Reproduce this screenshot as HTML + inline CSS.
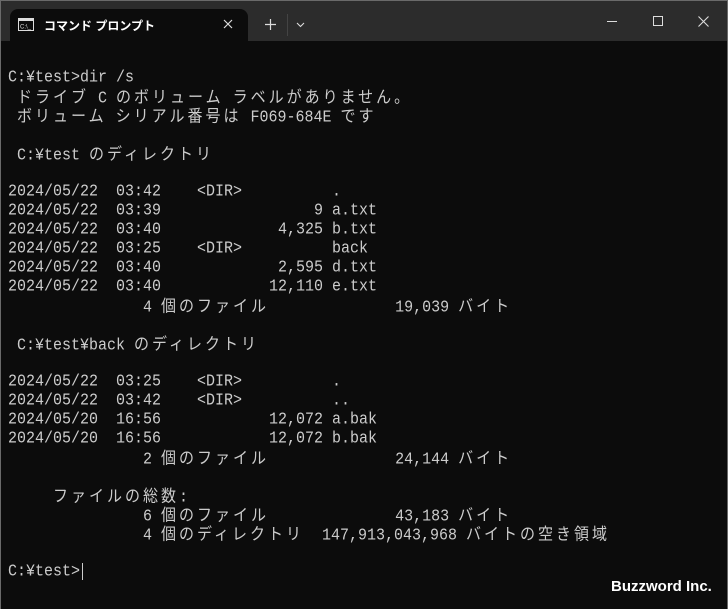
<!DOCTYPE html>
<html><head><meta charset="utf-8"><style>
*{margin:0;padding:0;box-sizing:border-box}
body{width:728px;height:609px;background:#0c0c0c;overflow:hidden;position:relative;font-family:"Liberation Mono","Noto Sans CJK JP",monospace;}
.win{position:absolute;left:0;top:0;width:728px;height:609px;border:1px solid #6a6a6a;border-bottom:none}
.title{position:absolute;left:0;top:0;width:728px;height:41px;background:#2c2c2c}
.tab{position:absolute;left:10px;top:9px;width:238px;height:32px;background:#0c0c0c;border-radius:8px 8px 0 0}
.tt{position:absolute;left:44px;top:17px;color:#fff;font:bold 12px "Liberation Sans","Noto Sans CJK JP",sans-serif}
.l{position:absolute;left:8px;white-space:pre;color:#cccccc;font-size:15px;line-height:19px;height:19px;transform:scaleY(1.08);transform-origin:0 50%}
.j{letter-spacing:3px;font-family:"Noto Sans CJK JP",sans-serif}
</style></head><body>
<div class="title"></div>
<div class="tab"></div>
<svg style="position:absolute;left:18px;top:18px" width="16" height="13"><rect x="0.5" y="0.5" width="15" height="12" fill="none" stroke="#ddd"/><rect x="1" y="1" width="14" height="2" fill="#ddd"/><text x="2" y="10.5" font-size="6" fill="#ddd" font-family="Liberation Sans">C:\_</text></svg>
<div class="tt">コマンド プロンプト</div>
<svg style="position:absolute;left:223px;top:19px" width="10" height="10"><path d="M1 1L9 9M9 1L1 9" stroke="#ddd" stroke-width="1.2"/></svg>
<svg style="position:absolute;left:265px;top:19px" width="11" height="11"><path d="M5.5 0V11M0 5.5H11" stroke="#ddd" stroke-width="1.2"/></svg>
<div style="position:absolute;left:287px;top:14px;width:1px;height:22px;background:#444"></div>
<svg style="position:absolute;left:296px;top:22px" width="9" height="6"><path d="M1 1L4.5 4.5L8 1" stroke="#ddd" fill="none" stroke-width="1.1"/></svg>
<div style="position:absolute;left:607px;top:21px;width:10px;height:1px;background:#ddd"></div>
<div style="position:absolute;left:653px;top:16px;width:10px;height:10px;border:1px solid #ddd"></div>
<svg style="position:absolute;left:698px;top:16px" width="11" height="11"><path d="M0.5 0.5L10.5 10.5M10.5 0.5L0.5 10.5" stroke="#ddd" stroke-width="1.1"/></svg>
<div class="win"></div>

<div class="l" style="top:68px">C:¥test&gt;dir /s</div>
<div class="l" style="top:87px"> <span class="j">ドライブ</span> C <span class="j">のボリューム</span> <span class="j">ラベルがありません。</span></div>
<div class="l" style="top:106px"> <span class="j">ボリューム</span> <span class="j">シリアル番号は</span> F069-684E <span class="j">です</span></div>
<div class="l" style="top:144px"> C:¥test <span class="j">のディレクトリ</span></div>
<div class="l" style="top:182px">2024/05/22  03:42    &lt;DIR&gt;          .</div>
<div class="l" style="top:201px">2024/05/22  03:39                 9 a.txt</div>
<div class="l" style="top:220px">2024/05/22  03:40             4,325 b.txt</div>
<div class="l" style="top:239px">2024/05/22  03:25    &lt;DIR&gt;          back</div>
<div class="l" style="top:258px">2024/05/22  03:40             2,595 d.txt</div>
<div class="l" style="top:277px">2024/05/22  03:40            12,110 e.txt</div>
<div class="l" style="top:296px">               4 <span class="j">個のファイル</span>              19,039 <span class="j">バイト</span></div>
<div class="l" style="top:334px"> C:¥test¥back <span class="j">のディレクトリ</span></div>
<div class="l" style="top:372px">2024/05/22  03:25    &lt;DIR&gt;          .</div>
<div class="l" style="top:391px">2024/05/22  03:42    &lt;DIR&gt;          ..</div>
<div class="l" style="top:410px">2024/05/20  16:56            12,072 a.bak</div>
<div class="l" style="top:429px">2024/05/20  16:56            12,072 b.bak</div>
<div class="l" style="top:448px">               2 <span class="j">個のファイル</span>              24,144 <span class="j">バイト</span></div>
<div class="l" style="top:486px">     <span class="j">ファイルの総数</span>:</div>
<div class="l" style="top:505px">               6 <span class="j">個のファイル</span>              43,183 <span class="j">バイト</span></div>
<div class="l" style="top:524px">               4 <span class="j">個のディレクトリ</span>  147,913,043,968 <span class="j">バイトの空き領域</span></div>
<div class="l" style="top:562px">C:¥test&gt;</div>
<div style="position:absolute;left:82px;top:563px;width:1px;height:17px;background:#ccc"></div>
<div style="position:absolute;left:611px;top:578px;color:#fff;font:bold 15px 'Liberation Sans',sans-serif">Buzzword Inc.</div>
</body></html>
